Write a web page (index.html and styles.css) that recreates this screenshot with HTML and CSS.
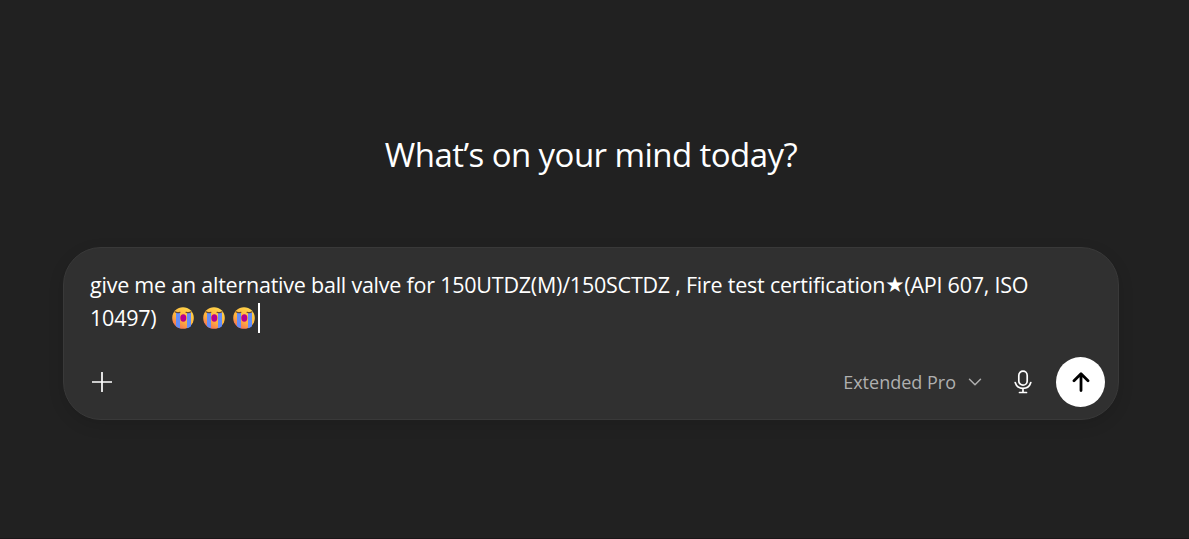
FILE: index.html
```
<!DOCTYPE html>
<html lang="en">
<head>
  <meta charset="UTF-8" />
  <meta name="viewport" content="width=device-width, initial-scale=1.0"/>
  <title>New chat</title>
  <link rel="stylesheet" href="styles.css">
</head>
<body>
  <svg class="defs" width="0" height="0" aria-hidden="true">
    <defs>
      <linearGradient id="face" x1="0.8" y1="0" x2="0.2" y2="1">
        <stop offset="0" stop-color="#ffd84a"/>
        <stop offset="0.6" stop-color="#ffb03c"/>
        <stop offset="1" stop-color="#f0655c"/>
      </linearGradient>
      <symbol id="sob" viewBox="0 0 22 22">
        <circle cx="11" cy="11" r="10.8" fill="url(#face)"/>
        <path d="M4 6h4v15.200a11 11 0 0 1-4-2zM15 6h4v13.200a11 11 0 0 1-4 2z" fill="#648df8"/>
        <path d="M3 4.800q2 1.500 5 .4M14 5.200q3 1.100 5-.4" fill="none" stroke="#6b4a30" stroke-width="1.100" stroke-linecap="round"/>
        <ellipse cx="11.300" cy="11" rx="3" ry="3.700" fill="#b9008c"/>
      </symbol>
    </defs>
  </svg>

  <main>
    <h1>What’s on your mind today?</h1>

    <div class="composer">
      <div class="prompt">
        <div class="line">give me an alternative ball valve for 150UTDZ(M)/150SCTDZ , Fire test certification<span class="star">★</span>(API 607, ISO</div>
        <div class="line">
          <span>10497)</span>
          <span class="emojis">
            <svg class="emoji"><use href="#sob"/></svg>
            <svg class="emoji"><use href="#sob"/></svg>
            <svg class="emoji"><use href="#sob"/></svg>
          </span>
          <span class="caret"></span>
        </div>
      </div>

      <div class="toolbar">
        <button class="add" aria-label="Add">
          <svg width="20" height="20" viewBox="0 0 20 20"><path d="M10 .5v19M.5 10h19"/></svg>
        </button>
        <button class="model">
          <span>Extended Pro</span>
          <svg width="14" height="8" viewBox="0 0 14 8"><path d="M1.500 1.200L7 6.700l5.500-5.500"/></svg>
        </button>
        <button class="mic" aria-label="Dictate">
          <svg width="18" height="24" viewBox="0 0 18 24"><rect x="4.800" y="1.200" width="8.400" height="14" rx="4.200"/><path d="M1.200 12.500C2.400 16.500 5.200 18.400 9 18.400s6.600-1.900 7.800-5.900M9 18.400v4M5.500 22.500h7"/></svg>
        </button>
        <button class="send" aria-label="Send">
          <svg width="18" height="20" viewBox="0 0 18 20"><path d="M9 18.500V2M2 8.700L9 1.700l7 7"/></svg>
        </button>
      </div>
    </div>
  </main>
</body>
</html>
```

FILE: styles.css
```
* {
  box-sizing: border-box;
}
body {
  margin: 0;
  height: 539px;
  overflow: hidden;
  background-color: #212121;
  border-bottom: 1px solid #1b1719;
  color: #fff;
  font-family: "Open Sans", "Noto Sans", sans-serif;
}
.defs {
  display: block;
}
main {
  width: 1056px;
  margin-left: 63px;
  padding-top: 131px;
}
h1 {
  margin: 0 0 68px;
  height: 48px;
  line-height: 48px;
  font-size: 33px;
  font-weight: 400;
  letter-spacing: -0.56px;
  text-align: center;
}
.composer {
  height: 173px;
  padding: 20px 13px 12px 26px;
  background-color: #303030;
  border: 1px solid #393939;
  border-radius: 38px;
  box-shadow: 0 5px 16px rgba(0, 0, 0, 0.12);
}
.prompt {
  height: 66px;
  font-size: 21.5px;
  line-height: 33px;
  white-space: nowrap;
  letter-spacing: -0.23px;
}
.line {
  display: flex;
  align-items: center;
  height: 33px;
}
.star {
  font-family: "DejaVu Sans", sans-serif;
}
.emojis {
  display: flex;
  gap: 8.5px;
  margin-left: 16px;
}
.emoji {
  width: 22px;
  height: 22px;
}
.caret {
  width: 2px;
  height: 30px;
  margin-left: 3px;
  background-color: #fff;
}
.toolbar {
  display: flex;
  align-items: center;
  height: 50px;
  margin-top: 23px;
}
button {
  display: flex;
  align-items: center;
  justify-content: center;
  padding: 0;
  border: none;
  background: none;
  color: #fff;
  font-family: inherit;
}
button path, button rect {
  fill: none;
  stroke: currentColor;
  stroke-width: 1.7;
  stroke-linecap: round;
  stroke-linejoin: round;
}
.add {
  margin-left: 1.5px;
  margin-right: auto;
}
.model {
  gap: 12px;
  margin-right: 32px;
  color: #afafaf;
  font-size: 18px;
  letter-spacing: 0;
}
.model path {
  stroke-width: 1.5;
}
.mic {
  margin-right: 24px;
}
.send {
  width: 49px;
  height: 50px;
  border-radius: 50%;
  background-color: #fff;
  color: #000;
}
.send path {
  stroke-width: 2.8;
}
```
